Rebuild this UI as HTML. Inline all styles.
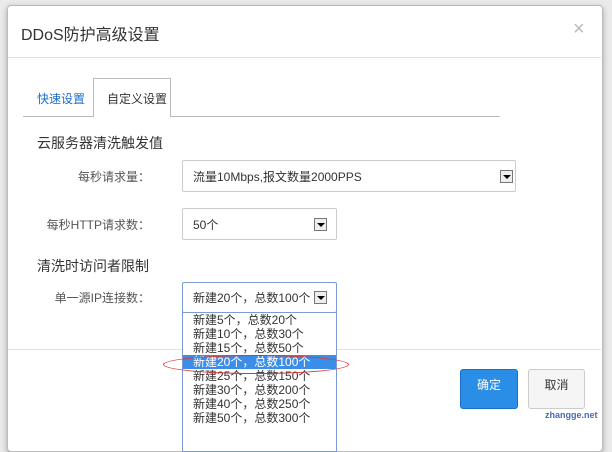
<!DOCTYPE html>
<html><head><meta charset="utf-8"><style>
body{margin:0;width:612px;height:428px;overflow:hidden;background:#eaeaea;font-family:"Liberation Sans","Noto Sans CJK SC",sans-serif;position:relative}
.dlg{position:absolute;left:7px;top:5px;width:594px;height:445px;background:#fff;border:1px solid #bbb;border-radius:4px;box-shadow:0 2px 6px rgba(0,0,0,.3)}
.a{position:absolute}
.sel{position:absolute;border:1px solid #ccc;border-radius:2px;background:#fff;font-size:12px;color:#333;box-sizing:border-box}
.arr{position:absolute;width:13px;height:13px;border:1px solid #777;background:#eee;box-sizing:border-box}
.arr:after{content:"";position:absolute;left:2px;top:4px;border:4px solid transparent;border-top:4px solid #000;border-bottom:0}
.lbl{position:absolute;font-size:12px;color:#555;text-align:right;width:150px}
.list{position:absolute;left:182px;top:312px;width:155px;height:140px;background:#fff;border:1px solid #7a9cd3;box-sizing:border-box;font-size:12px;color:#333;line-height:14px}
.list div{padding-left:10px;height:14px}
</style></head><body>
<div class="dlg"></div>
<div class="a" style="left:21px;top:21px;font-size:16px;color:#333">DDoS防护高级设置</div>
<div class="a" style="left:573px;top:18px;font-size:20px;color:#bbb">×</div>
<div class="a" style="left:8px;top:57px;width:593px;height:1px;background:#e2e2e2"></div>
<div class="a" style="left:23px;top:116px;width:477px;height:1px;background:#bbb"></div>
<div class="a" style="left:93px;top:78px;width:78px;height:39px;background:#fff;border:1px solid #bbb;border-bottom:none;box-sizing:border-box"></div>
<div class="a" style="left:37px;top:90px;font-size:12px;color:#1a6fc9">快速设置</div>
<div class="a" style="left:107px;top:90px;font-size:12px;color:#333">自定义设置</div>
<div class="a" style="left:37px;top:133px;font-size:14px;color:#333">云服务器清洗触发值</div>
<div class="lbl" style="left:0;top:168px;width:150px">每秒请求量：</div>
<div class="sel" style="left:182px;top:160px;width:334px;height:32px"><span class="a" style="left:10px;top:7px">流量10Mbps,报文数量2000PPS</span><div class="arr" style="left:317px;top:9px"></div></div>
<div class="lbl" style="top:216px">每秒HTTP请求数：</div>
<div class="sel" style="left:182px;top:208px;width:155px;height:32px"><span class="a" style="left:10px;top:7px">50个</span><div class="arr" style="left:131px;top:9px"></div></div>
<div class="a" style="left:37px;top:256px;font-size:14px;color:#333">清洗时访问者限制</div>
<div class="lbl" style="top:289px">单一源IP连接数：</div>
<div class="sel" style="left:182px;top:282px;width:155px;height:31px;border-color:#7a9cd3"><span class="a" style="left:10px;top:6px">新建20个，总数100个</span><div class="arr" style="left:131px;top:8px"></div></div>
<div class="a" style="left:8px;top:349px;width:593px;height:1px;background:#e2e2e2"></div>
<div class="a" style="left:460px;top:369px;width:58px;height:40px;background:#2a8ee6;border:1px solid #1a6fc9;border-radius:3px;box-sizing:border-box;color:#fff;font-size:12px;text-align:center;line-height:30px">确定</div>
<div class="a" style="left:528px;top:369px;width:57px;height:40px;background:#f5f5f5;border:1px solid #ccc;border-radius:3px;box-sizing:border-box;color:#333;font-size:12px;text-align:center;line-height:30px">取消</div>
<div class="list">
<div>新建5个，总数20个</div><div>新建10个，总数30个</div><div>新建15个，总数50个</div>
<div style="background:#3a8ee8;color:#fff">新建20个，总数100个</div>
<div>新建25个，总数150个</div><div>新建30个，总数200个</div><div>新建40个，总数250个</div><div>新建50个，总数300个</div>
</div>
<div class="a" style="left:163px;top:355px;width:184px;height:17px;border:1px solid #d33;border-radius:50%"></div>
<div class="a" style="left:545px;top:410px;font-size:9px;color:#4a6ab0;font-weight:bold">zhangge.net</div>
</body></html>
